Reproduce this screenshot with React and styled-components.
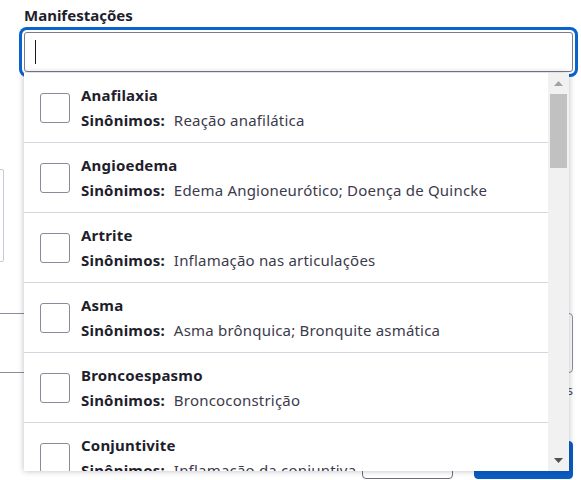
import React from "react";
import styled, { createGlobalStyle } from "styled-components";

const GlobalStyle = createGlobalStyle`
  html, body { margin: 0; padding: 0; background: #ffffff; }
  body {
    font-family: "Noto Sans", "Liberation Sans", sans-serif;
    color: #1e1e2d;
    overflow: hidden;
  }
  * { box-sizing: border-box; }
`;

const Page = styled.div`
  width: 581px;
  height: 480px;
  padding: 5px 8px 0 24px;
  overflow: hidden;
  position: relative;
`;

const Label = styled.div`
  font-size: 15px;
  font-weight: 700;
  line-height: 20px;
  margin-bottom: 7px;
  color: #1e1e2d;
`;

const Combo = styled.div`
  position: relative;
  z-index: 10;
`;

const InputBox = styled.div`
  position: relative;
  height: 40px;
  border: 1px solid #7c7b8e;
  border-radius: 3px;
  background: #fff;
  box-shadow: ${(p) => (p.$focused ? "0 0 0 2px #ffffff, 0 0 0 5px #0a62cc" : "none")};
`;

const Input = styled.input`
  width: 100%;
  height: 100%;
  border: 0;
  outline: none;
  background: transparent;
  padding: 0 10px;
  font: inherit;
  font-size: 15px;
  caret-color: transparent;
`;

const Caret = styled.span`
  position: absolute;
  left: 10px;
  top: 7px;
  width: 1px;
  height: 24px;
  background: #1a1a1a;
`;

const Dropdown = styled.div`
  position: absolute;
  top: calc(100% + 1px);
  left: 0;
  width: 545px;
  height: 398px;
  display: flex;
  background: #fff;
  box-shadow: 0 0 6px rgba(20, 20, 40, 0.28);
`;

const List = styled.ul`
  flex: 1;
  margin: 0;
  padding: 0;
  list-style: none;
  overflow: hidden;
`;

const Row = styled.li`
  height: 70px;
  display: flex;
  align-items: center;
  gap: 11px;
  padding-left: 16px;
  border-bottom: 1px solid #d6d5df;
`;

const Checkbox = styled.span`
  flex: none;
  width: 30px;
  height: 30px;
  border: 1px solid #8b8a9b;
  border-radius: 3px;
  background: #fff;
`;

const Texts = styled.div`
  display: flex;
  flex-direction: column;
  letter-spacing: 0.2px;
`;

const Title = styled.div`
  font-size: 15px;
  font-weight: 700;
  line-height: 25px;
  color: #1e1e2d;
  white-space: nowrap;
`;

const Synonyms = styled.div`
  font-size: 15px;
  line-height: 25px;
  color: #3c3b4c;
  white-space: nowrap;
  letter-spacing: 0.2px;
`;

const SynLabel = styled.span`
  font-weight: 700;
  color: #1e1e2d;
  margin-right: 9px;
  letter-spacing: 0.2px;
`;

const Scrollbar = styled.div`
  flex: none;
  width: 21px;
  display: flex;
  flex-direction: column;
  background: #f1f1f1;
`;

const ScrollButton = styled.div`
  height: 21px;
  display: flex;
  align-items: center;
  justify-content: center;
`;

const Track = styled.div`
  flex: 1;
  padding: 0 2px;
`;

const Thumb = styled.div`
  height: 74px;
  background: #c1c1c1;
`;

const Arrow = ({ up, color }) => (
  <svg width="9" height="5" viewBox="0 0 9 5">
    <path d={up ? "M0 5 L4.5 0 L9 5 Z" : "M0 0 L4.5 5 L9 0 Z"} fill={color} />
  </svg>
);

const BgCard = styled.div`
  margin-top: 97px;
  margin-left: -30px;
  width: 10px;
  height: 93px;
  border: 1px solid #c9c8d3;
  border-radius: 2px;
`;

const BgTextArea = styled.div`
  margin-top: 51px;
  margin-left: -30px;
  height: 60px;
  border: 1px solid #8d8c9c;
  border-radius: 4px;
`;

const Helper = styled.div`
  margin-top: 8px;
  text-align: right;
  font-size: 13px;
  line-height: 18px;
  color: #4a4a5a;
`;

const Actions = styled.div`
  margin-top: 42px;
  display: flex;
  justify-content: flex-end;
  gap: 21px;
`;

const Button = styled.button`
  height: 38px;
  width: ${(p) => p.$w}px;
  border-radius: 4px;
  font: inherit;
  font-size: 15px;
  font-weight: 700;
  border: 1px solid ${(p) => (p.$primary ? "#0a5cc2" : "#6e6d7e")};
  background: ${(p) => (p.$primary ? "#0a5cc2" : "#fff")};
  color: ${(p) => (p.$primary ? "#fff" : "#1e1e2d")};
`;

const items = [
  ["Anafilaxia", "Reação anafilática"],
  ["Angioedema", "Edema Angioneurótico; Doença de Quincke"],
  ["Artrite", "Inflamação nas articulações"],
  ["Asma", "Asma brônquica; Bronquite asmática"],
  ["Broncoespasmo", "Broncoconstrição"],
  ["Conjuntivite", "Inflamação da conjuntiva"],
  ["Dermatite", "Inflamação da pele"],
];

export default function App() {
  return (
    <>
      <GlobalStyle />
      <Page>
        <Label>Manifestações</Label>
        <Combo>
          <InputBox $focused>
            <Input aria-label="Manifestações" />
            <Caret />
          </InputBox>
          <Dropdown>
            <List>
              {items.map(([name, syn]) => (
                <Row key={name}>
                  <Checkbox />
                  <Texts>
                    <Title>{name}</Title>
                    <Synonyms>
                      <SynLabel>Sinônimos:</SynLabel>
                      {syn}
                    </Synonyms>
                  </Texts>
                </Row>
              ))}
            </List>
            <Scrollbar>
              <ScrollButton>
                <Arrow up color="#a3a3a3" />
              </ScrollButton>
              <Track>
                <Thumb />
              </Track>
              <ScrollButton>
                <Arrow color="#505050" />
              </ScrollButton>
            </Scrollbar>
          </Dropdown>
        </Combo>
        <BgCard />
        <BgTextArea />
        <Helper>Máximo de 500 caracteres</Helper>
        <Actions>
          <Button $w={91}>Cancelar</Button>
          <Button $w={99} $primary>
            Salvar
          </Button>
        </Actions>
      </Page>
    </>
  );
}
